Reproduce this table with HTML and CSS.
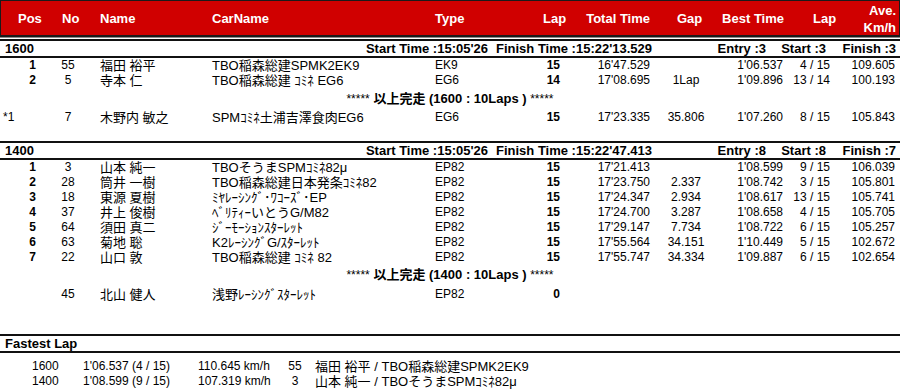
FILE: index.html
```html
<!DOCTYPE html>
<html lang="ja">
<head>
<meta charset="utf-8">
<title>Result</title>
<link rel="stylesheet" href="styles.css">
</head>
<body>
<div class="page">
  <div class="head row">
    <div class="h-pos">Pos</div>
    <div class="h-no">No</div>
    <div class="h-name">Name</div>
    <div class="h-car">CarName</div>
    <div class="h-type">Type</div>
    <div class="h-lap">Lap</div>
    <div class="h-tt">Total Time</div>
    <div class="h-gap">Gap</div>
    <div class="h-best">Best Time</div>
    <div class="h-blap">Lap</div>
    <div class="h-ave">Ave.<br>Km/h</div>
  </div>

  <section class="cls cls-1600">
    <div class="cls-title">
      <div class="t-label">1600</div>
      <div class="t-start">Start Time :15:05'26</div>
      <div class="t-finish">Finish Time :15:22'13.529</div>
      <div class="t-entry">Entry :3</div>
      <div class="t-st">Start :3</div>
      <div class="t-fin">Finish :3</div>
    </div>
    <div class="row data">
      <div class="pos">1</div><div class="no">55</div><div class="name">福田 裕平</div><div class="car">TBO稲森総建SPMK2EK9</div><div class="type">EK9</div><div class="lap">15</div><div class="tt">16'47.529</div><div class="gap"></div><div class="best">1'06.537</div><div class="blap">4 / 15</div><div class="ave">109.605</div>
    </div>
    <div class="row data">
      <div class="pos">2</div><div class="no">5</div><div class="name">寺本 仁</div><div class="car">TBO稲森総建 ｺﾐﾈ EG6</div><div class="type">EG6</div><div class="lap">14</div><div class="tt">17'08.695</div><div class="gap">1Lap</div><div class="best">1'09.896</div><div class="blap">13 / 14</div><div class="ave">100.193</div>
    </div>
    <div class="fin"><span class="ast">*****</span> 以上完走 (1600 : 10Laps ) <span class="ast">*****</span></div>
    <div class="row data">
      <div class="pos dq">*1</div><div class="no">7</div><div class="name">木野内 敏之</div><div class="car">SPMｺﾐﾈ土浦吉澤食肉EG6</div><div class="type">EG6</div><div class="lap">15</div><div class="tt">17'23.335</div><div class="gap">35.806</div><div class="best">1'07.260</div><div class="blap">8 / 15</div><div class="ave">105.843</div>
    </div>
  </section>

  <section class="cls cls-1400">
    <div class="cls-title">
      <div class="t-label">1400</div>
      <div class="t-start">Start Time :15:05'26</div>
      <div class="t-finish">Finish Time :15:22'47.413</div>
      <div class="t-entry">Entry :8</div>
      <div class="t-st">Start :8</div>
      <div class="t-fin">Finish :7</div>
    </div>
    <div class="row data">
      <div class="pos">1</div><div class="no">3</div><div class="name">山本 純一</div><div class="car">TBOそうまSPMｺﾐﾈ82μ</div><div class="type">EP82</div><div class="lap">15</div><div class="tt">17'21.413</div><div class="gap"></div><div class="best">1'08.599</div><div class="blap">9 / 15</div><div class="ave">106.039</div>
    </div>
    <div class="row data">
      <div class="pos">2</div><div class="no">28</div><div class="name">筒井 一樹</div><div class="car">TBO稲森総建日本発条ｺﾐﾈ82</div><div class="type">EP82</div><div class="lap">15</div><div class="tt">17'23.750</div><div class="gap">2.337</div><div class="best">1'08.742</div><div class="blap">3 / 15</div><div class="ave">105.801</div>
    </div>
    <div class="row data">
      <div class="pos">3</div><div class="no">18</div><div class="name">東源 夏樹</div><div class="car">ﾐﾔﾚｰｼﾝｸﾞ･ﾜｺｰｽﾞ･EP</div><div class="type">EP82</div><div class="lap">15</div><div class="tt">17'24.347</div><div class="gap">2.934</div><div class="best">1'08.617</div><div class="blap">13 / 15</div><div class="ave">105.741</div>
    </div>
    <div class="row data">
      <div class="pos">4</div><div class="no">37</div><div class="name">井上 俊樹</div><div class="car">ﾍﾞﾘﾃｨｰいとうG/M82</div><div class="type">EP82</div><div class="lap">15</div><div class="tt">17'24.700</div><div class="gap">3.287</div><div class="best">1'08.658</div><div class="blap">4 / 15</div><div class="ave">105.705</div>
    </div>
    <div class="row data">
      <div class="pos">5</div><div class="no">64</div><div class="name">須田 真二</div><div class="car">ｼﾞｰﾓｰｼｮﾝｽﾀｰﾚｯﾄ</div><div class="type">EP82</div><div class="lap">15</div><div class="tt">17'29.147</div><div class="gap">7.734</div><div class="best">1'08.722</div><div class="blap">6 / 15</div><div class="ave">105.257</div>
    </div>
    <div class="row data">
      <div class="pos">6</div><div class="no">63</div><div class="name">菊地 聡</div><div class="car">K2ﾚｰｼﾝｸﾞG/ｽﾀｰﾚｯﾄ</div><div class="type">EP82</div><div class="lap">15</div><div class="tt">17'55.564</div><div class="gap">34.151</div><div class="best">1'10.449</div><div class="blap">5 / 15</div><div class="ave">102.672</div>
    </div>
    <div class="row data">
      <div class="pos">7</div><div class="no">22</div><div class="name">山口 敦</div><div class="car">TBO稲森総建 ｺﾐﾈ 82</div><div class="type">EP82</div><div class="lap">15</div><div class="tt">17'55.747</div><div class="gap">34.334</div><div class="best">1'09.887</div><div class="blap">6 / 15</div><div class="ave">102.654</div>
    </div>
    <div class="fin"><span class="ast">*****</span> 以上完走 (1400 : 10Laps ) <span class="ast">*****</span></div>
    <div class="row data">
      <div class="pos"></div><div class="no">45</div><div class="name">北山 健人</div><div class="car">浅野ﾚｰｼﾝｸﾞｽﾀｰﾚｯﾄ</div><div class="type">EP82</div><div class="lap">0</div><div class="tt"></div><div class="gap"></div><div class="best"></div><div class="blap"></div><div class="ave"></div>
    </div>
  </section>

  <section class="cls cls-fast">
    <div class="cls-title">
      <div class="t-label">Fastest Lap</div>
    </div>
    <div class="fast-list">
      <div class="fast">
        <div class="f-cls">1600</div><div class="f-time">1'06.537 (4 / 15)</div><div class="f-spd">110.645 km/h</div><div class="f-no">55</div><div class="f-name">福田 裕平 / TBO稲森総建SPMK2EK9</div>
      </div>
      <div class="fast">
        <div class="f-cls">1400</div><div class="f-time">1'08.599 (9 / 15)</div><div class="f-spd">107.319 km/h</div><div class="f-no">3</div><div class="f-name">山本 純一 / TBOそうまSPMｺﾐﾈ82μ</div>
      </div>
    </div>
  </section>
</div>
</body>
</html>
```

FILE: styles.css
```css
html, body {
  margin: 0;
  padding: 0;
  background: #fff;
}
body {
  font-family: "Liberation Sans", "Noto Sans CJK JP", sans-serif;
  font-size: 12px;
  color: #000;
  width: 900px;
  height: 390px;
  overflow: hidden;
}
.page {
  width: 900px;
}

/* shared column grid */
.row {
  display: grid;
  grid-template-columns: 40px 52px 120px 223px 85px 41px 89px 72px 62px 47px 65px;
  align-items: center;
  white-space: nowrap;
}

/* header bar */
.head {
  height: 37px;
  background: #d00000;
  box-shadow: inset 0 0 0 1px #1a1a1a, inset 0 -2px 0 #1a1a1a, 0 1px 0 #8a8a8a;
  color: #fff;
  font-weight: bold;
  font-size: 13px;
}
.head > div { line-height: 15px; }
.h-pos { padding-left: 18px; }
.h-no { padding-left: 22px; }
.h-name { padding-left: 8px; }
.h-lap { padding-left: 23px; }
.h-tt { text-align: right; }
.h-gap { padding-left: 27px; }
.h-best { text-align: right; }
.h-blap { padding-left: 29px; }
.h-ave { text-align: right; line-height: 17px !important; padding-top: 1px; }

/* class sections */
.cls {
  margin-top: 2px;
}
.cls-1400 { margin-top: 16px; }
.cls-fast { margin-top: 32px; }
.cls-title {
  display: grid;
  grid-template-columns: 300px 188px 172px 106px 60px 70px;
  border-top: 2px solid #111;
  border-bottom: 2px solid #111;
  height: 15px;
  line-height: 15px;
  font-weight: bold;
  font-size: 13px;
  white-space: nowrap;
}
.t-label { padding-left: 5px; }
.t-start { text-align: right; }
.t-finish { padding-left: 8px; }
.t-entry, .t-st, .t-fin { text-align: right; }

.data {
  height: 15px;
  line-height: 15px;
}
.pos { text-align: right; padding-right: 4px; font-weight: bold; }
.pos.dq { text-align: left; padding-left: 3px; font-weight: normal; }
.no { text-align: center; padding-left: 4px; }
.name { padding-left: 8px; font-size: 13px; }
.car { font-size: 13px; }
.lap { text-align: right; padding-right: 1px; font-weight: bold; }
.tt { text-align: right; }
.gap { text-align: center; }
.best { text-align: right; padding-right: 1px; }
.blap { text-align: right; padding-right: 1px; }
.ave { text-align: right; padding-right: 1px; }

.fin {
  height: 21px;
  line-height: 21px;
  text-align: center;
  font-weight: bold;
  font-size: 13px;
  margin-bottom: 1px;
}
.ast { font-weight: normal; font-size: 12px; }
.cls-1400 .fin { height: 20px; line-height: 20px; margin-bottom: 2px; }

/* fastest lap */
.fast-list {
  padding-top: 6px;
}
.fast {
  display: grid;
  grid-template-columns: 83px 115px 82px 30px 1fr;
  height: 15px;
  line-height: 15px;
  white-space: nowrap;
}
.f-cls { padding-left: 32px; }
.f-no { text-align: center; }
.f-name { padding-left: 5px; font-size: 13px; }
```
